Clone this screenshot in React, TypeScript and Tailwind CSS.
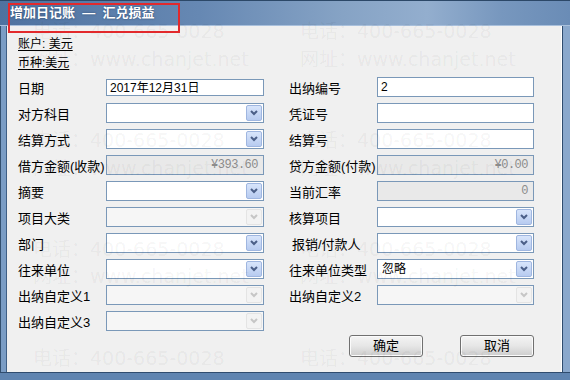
import React from 'react'

interface Field {
  label: string
  kind: 'text' | 'combo' | 'amount'
  value?: string
  disabled?: boolean
  indent?: boolean
  small?: boolean
}

const leftFields: Field[] = [
  { label: '日期', kind: 'text', value: '2017年12月31日', small: true },
  { label: '对方科目', kind: 'combo' },
  { label: '结算方式', kind: 'combo' },
  { label: '借方金额(收款)', kind: 'amount', value: '¥393.60' },
  { label: '摘要', kind: 'combo' },
  { label: '项目大类', kind: 'combo', disabled: true },
  { label: '部门', kind: 'combo' },
  { label: '往来单位', kind: 'combo' },
  { label: '出纳自定义1', kind: 'combo', disabled: true },
  { label: '出纳自定义3', kind: 'combo', disabled: true },
]

const rightFields: Field[] = [
  { label: '出纳编号', kind: 'text', value: '2' },
  { label: '凭证号', kind: 'text' },
  { label: '结算号', kind: 'text' },
  { label: '贷方金额(付款)', kind: 'amount', value: '¥0.00' },
  { label: '当前汇率', kind: 'amount', value: '0' },
  { label: '核算项目', kind: 'combo' },
  { label: '报销/付款人', kind: 'combo', indent: true },
  { label: '往来单位类型', kind: 'combo', value: '忽略' },
  { label: '出纳自定义2', kind: 'combo', disabled: true },
]

const watermarkRows = [21, 49, 130, 158, 239, 266, 348]

function Chevron({ disabled }: { disabled?: boolean }) {
  return (
    <div
      className={
        disabled
          ? 'w-[16px] h-[16px] flex items-center justify-center bg-[#f3f3f3] border border-[#e4e4e4] rounded-[2px]'
          : 'w-[16px] h-[16px] flex items-center justify-center bg-gradient-to-b from-[#d8e5fb] to-[#b7cbf0] border border-[#9fb6e0] rounded-[2px]'
      }
    >
      <svg width="10" height="8" viewBox="0 0 10 8">
        <polyline
          points="2,2 5,5 8,2"
          fill="none"
          stroke={disabled ? '#c6c6c6' : '#4b5f88'}
          strokeWidth="2"
        />
      </svg>
    </div>
  )
}

function Control({ field }: { field: Field }) {
  if (field.kind === 'combo') {
    return (
      <div
        className={`h-[20px] flex items-center justify-between border border-[#7a98b8] pl-[4px] pr-[1px] ${
          field.disabled ? 'bg-[#f6f6f6]' : 'bg-white'
        }`}
      >
        <span className="text-[12px] leading-none text-black">{field.value ?? ''}</span>
        <Chevron disabled={field.disabled} />
      </div>
    )
  }
  if (field.kind === 'amount') {
    return (
      <div className="h-[20px] flex items-center justify-end border border-[#7a98b8] bg-[#e9e9e9] px-[5px]">
        <span className="text-[12px] leading-none text-[#8c8c8c] font-['Liberation_Mono','Noto_Sans_CJK_SC',monospace] tracking-[-0.5px]">
          {field.value}
        </span>
      </div>
    )
  }
  return (
    <div
      className={`flex items-center border border-[#7a98b8] bg-white px-[3px] ${
        field.small ? 'h-[17px] mt-[2px]' : 'h-[20px]'
      }`}
    >
      <span className="text-[12px] leading-none text-black">{field.value ?? ''}</span>
    </div>
  )
}

function FieldColumn({ fields, labelWidth, inputWidth }: { fields: Field[]; labelWidth: number; inputWidth: number }) {
  return (
    <div
      className="grid auto-rows-[20px] gap-y-[6px]"
      style={{ gridTemplateColumns: `${labelWidth}px ${inputWidth}px` }}
    >
      {fields.map((f) => (
        <React.Fragment key={f.label}>
          <div className={`text-[13px] leading-none pt-[5px] text-black whitespace-nowrap ${f.indent ? 'pl-[3px]' : ''}`}>
            {f.label}
          </div>
          <Control field={f} />
        </React.Fragment>
      ))}
    </div>
  )
}

function DialogButton({ children }: { children: React.ReactNode }) {
  return (
    <button className="w-[74px] h-[22px] rounded-[3px] border border-[#707070] bg-gradient-to-b from-[#f4f4f4] via-[#e6e6e6] to-[#cdcdcd] text-[13px] text-black shadow-[inset_0_0_0_1px_#fbfbfb]">
      {children}
    </button>
  )
}

export default function App() {
  return (
    <div className="relative w-[570px] h-[380px] overflow-hidden bg-[#6f92bb] font-['Liberation_Sans','Noto_Sans_CJK_SC',sans-serif]">
      {/* title bar */}
      <div className="h-[26px] flex items-center pl-[10px] border-t border-[#2c4868] border-b border-b-[#a9c0dc] bg-[linear-gradient(90deg,#4e72a0_0%,#6688b3_35%,#86a3c5_60%,#93aece_75%,#7797be_88%,#6a8cb6_100%)]">
        <span className="text-white font-bold text-[13px] [text-shadow:0_0_2px_#2b4468]">
          增加日记账&nbsp; —&nbsp; 汇兑损益
        </span>
      </div>

      <div className="flex h-[346px]">
        <div className="w-[7px] border-l border-[#33506f] border-r border-r-[#3f5f85] bg-[#7b9dc5]" />
        <div className="flex-1 bg-[#f0f0f0] border-r border-white">
          <div className="pt-[11px] pl-[11px] text-[12px] leading-[14px] text-black">
            <div className="h-[16px]">
              <span className="underline underline-offset-2">账户: 美元</span>
            </div>
            <div className="h-[16px] mt-[3px]">
              <span className="underline underline-offset-2">币种:美元</span>
            </div>
          </div>

          <div className="flex gap-[25px] pl-[11px] mt-[5px]">
            <FieldColumn fields={leftFields} labelWidth={88} inputWidth={158} />
            <FieldColumn fields={rightFields} labelWidth={88} inputWidth={157} />
          </div>

          <div className="flex justify-end gap-[37px] pr-[27px] mt-[4px]">
            <DialogButton>确定</DialogButton>
            <DialogButton>取消</DialogButton>
          </div>
        </div>
        <div className="w-[8px] border-l border-[#2f4c6e] bg-[#8aa8cc]" />
      </div>
      <div className="h-[8px] border-t border-[#2f4c6e] bg-[#5f84b0]" />

      {/* watermark overlay */}
      <div className="absolute inset-0 pointer-events-none font-['DejaVu_Sans','Noto_Sans_CJK_SC',sans-serif] text-[19px] leading-[20px] text-black/[0.05]">
        {watermarkRows.map((top, i) => (
          <React.Fragment key={top}>
            <div className="absolute left-[33px] whitespace-nowrap" style={{ top }}>
              {i % 2 === 0 ? '电话：400-665-0028' : '网址：www.chanjet.net'}
            </div>
            <div className="absolute left-[300px] whitespace-nowrap" style={{ top }}>
              {i % 2 === 0 ? '电话：400-665-0028' : '网址：www.chanjet.net'}
            </div>
          </React.Fragment>
        ))}
      </div>

      {/* annotation box */}
      <div className="absolute left-[8px] top-[3px] w-[172px] h-[30px] border-2 border-[#e2292c] pointer-events-none" />
    </div>
  )
}
